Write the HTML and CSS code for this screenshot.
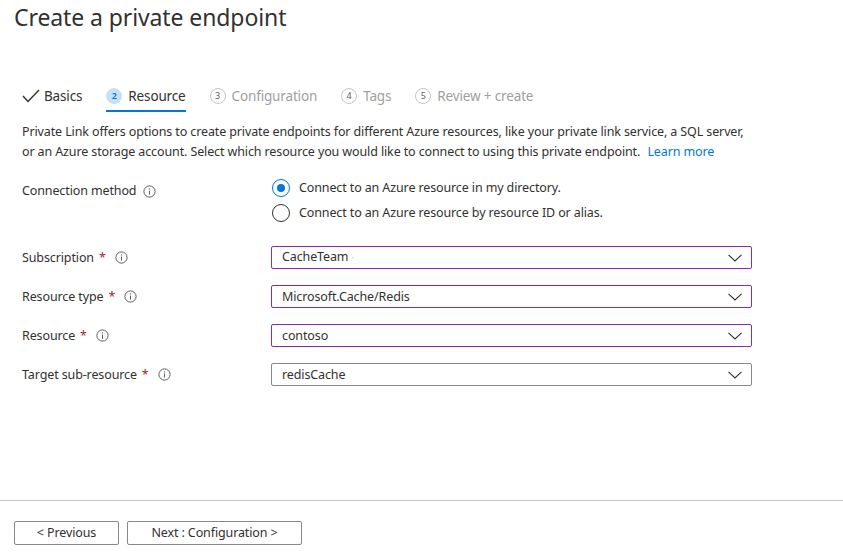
FILE: index.html
```html
<!DOCTYPE html>
<html>
<head>
<meta charset="utf-8">
<link rel="stylesheet" href="styles.css">
</head>
<body>
<div class="page">
  <main class="main">
    <h1 class="title">Create a private endpoint</h1>
    <nav class="tabs">
      <div class="tab done">
        <svg class="check" width="18" height="14" viewBox="0 0 18 14"><polyline points="1,7 6,12.5 17,1" fill="none" stroke="#323130" stroke-width="1.4"/></svg>
        <span>Basics</span>
      </div>
      <div class="tab active">
        <span class="step">2</span><span>Resource</span>
      </div>
      <div class="tab">
        <span class="step">3</span><span>Configuration</span>
      </div>
      <div class="tab">
        <span class="step">4</span><span>Tags</span>
      </div>
      <div class="tab">
        <span class="step">5</span><span>Review + create</span>
      </div>
    </nav>
    <p class="intro">Private Link offers options to create private endpoints for different Azure resources, like your private link service, a SQL server, or an Azure storage account. Select which resource you would like to connect to using this private endpoint. <a class="link">Learn more</a></p>

    <div class="form">
      <div class="row radio-row">
        <div class="label">Connection method <svg class="info" width="13" height="13" viewBox="0 0 13 13"><circle cx="6.5" cy="6.5" r="5.6" fill="none" stroke="#605e5c" stroke-width="1"/><line x1="6.5" y1="5.6" x2="6.5" y2="9.6" stroke="#605e5c" stroke-width="1"/><circle cx="6.5" cy="3.9" r="0.7" fill="#605e5c"/></svg></div>
        <div class="radios">
          <div class="radio checked"><span class="dot"></span><span>Connect to an Azure resource in my directory.</span></div>
          <div class="radio"><span class="dot"></span><span>Connect to an Azure resource by resource ID or alias.</span></div>
        </div>
      </div>

      <div class="row">
        <div class="label">Subscription <span class="req">*</span> <svg class="info" width="13" height="13" viewBox="0 0 13 13"><circle cx="6.5" cy="6.5" r="5.6" fill="none" stroke="#605e5c" stroke-width="1"/><line x1="6.5" y1="5.6" x2="6.5" y2="9.6" stroke="#605e5c" stroke-width="1"/><circle cx="6.5" cy="3.9" r="0.7" fill="#605e5c"/></svg></div>
        <div class="select invalid"><span>CacheTeam <span class="faint">&middot;</span></span><svg class="chev" width="14" height="8" viewBox="0 0 14 8"><polyline points="0.5,0.8 7,7 13.5,0.8" fill="none" stroke="#323130" stroke-width="1.1"/></svg></div>
      </div>

      <div class="row">
        <div class="label">Resource type <span class="req">*</span> <svg class="info" width="13" height="13" viewBox="0 0 13 13"><circle cx="6.5" cy="6.5" r="5.6" fill="none" stroke="#605e5c" stroke-width="1"/><line x1="6.5" y1="5.6" x2="6.5" y2="9.6" stroke="#605e5c" stroke-width="1"/><circle cx="6.5" cy="3.9" r="0.7" fill="#605e5c"/></svg></div>
        <div class="select invalid"><span>Microsoft.Cache/Redis</span><svg class="chev" width="14" height="8" viewBox="0 0 14 8"><polyline points="0.5,0.8 7,7 13.5,0.8" fill="none" stroke="#323130" stroke-width="1.1"/></svg></div>
      </div>

      <div class="row">
        <div class="label">Resource <span class="req">*</span> <svg class="info" width="13" height="13" viewBox="0 0 13 13"><circle cx="6.5" cy="6.5" r="5.6" fill="none" stroke="#605e5c" stroke-width="1"/><line x1="6.5" y1="5.6" x2="6.5" y2="9.6" stroke="#605e5c" stroke-width="1"/><circle cx="6.5" cy="3.9" r="0.7" fill="#605e5c"/></svg></div>
        <div class="select invalid"><span>contoso</span><svg class="chev" width="14" height="8" viewBox="0 0 14 8"><polyline points="0.5,0.8 7,7 13.5,0.8" fill="none" stroke="#323130" stroke-width="1.1"/></svg></div>
      </div>

      <div class="row">
        <div class="label">Target sub-resource <span class="req">*</span> <svg class="info" width="13" height="13" viewBox="0 0 13 13"><circle cx="6.5" cy="6.5" r="5.6" fill="none" stroke="#605e5c" stroke-width="1"/><line x1="6.5" y1="5.6" x2="6.5" y2="9.6" stroke="#605e5c" stroke-width="1"/><circle cx="6.5" cy="3.9" r="0.7" fill="#605e5c"/></svg></div>
        <div class="select"><span>redisCache</span><svg class="chev" width="14" height="8" viewBox="0 0 14 8"><polyline points="0.5,0.8 7,7 13.5,0.8" fill="none" stroke="#323130" stroke-width="1.1"/></svg></div>
      </div>
    </div>
  </main>
  <footer class="footer">
    <button class="btn prev">&lt; Previous</button>
    <button class="btn next">Next : Configuration &gt;</button>
  </footer>
</div>
</body>
</html>
```
FILE: styles.css
```css
* { box-sizing: border-box; }
html, body { margin: 0; padding: 0; background: #fff; }
body {
  font-family: "Noto Sans", "Open Sans", sans-serif;
  color: #323130;
  font-size: 12.5px;
  letter-spacing: -0.12px;
}
.page {
  width: 843px;
  height: 556px;
  display: flex;
  flex-direction: column;
  overflow: hidden;
}
.main {
  height: 501px;
  flex: none;
  border-bottom: 1px solid #c8c6c4;
}
.title {
  margin: 0;
  padding: 0 0 0 14px;
  font-size: 23px;
  font-weight: 400;
  line-height: 34px;
  letter-spacing: -0.1px;
}
.tabs {
  display: flex;
  margin: 52px 0 0 22px;
  gap: 24px;
  height: 36px;
}
.tab {
  display: flex;
  align-items: flex-start;
  gap: 6px;
  font-size: 13.5px;
  letter-spacing: -0.15px;
  line-height: 20px;
  color: #a19f9d;
  height: 26px;
}
.tab.done { color: #323130; gap: 4px; }
.tab.done .check { margin-top: 3px; }
.tab.active {
  color: #323130;
  border-bottom: 2px solid #0078d4;
  height: 26px;
}
.step {
  width: 16px;
  height: 16px;
  border-radius: 50%;
  border: 1px solid #c8c6c4;
  font-size: 9px;
  letter-spacing: 0;
  line-height: 14px;
  text-align: center;
  margin-top: 2px;
  color: #605e5c;
}
.tab.active .step {
  background: #c7e0f4;
  border-color: #c7e0f4;
  color: #0078d4;
  font-weight: 600;
}
.intro {
  margin: 0 0 0 22px;
  width: 736px;
  line-height: 20px;
}
.link { color: #0078d4; margin-left: 4px; }
.form {
  margin: 16px 0 0 22px;
  display: flex;
  flex-direction: column;
  gap: 16px;
}
.row {
  display: flex;
  align-items: center;
}
.radio-row { align-items: flex-start; margin-bottom: 7px; }
.label {
  width: 249px;
  flex: none;
  display: flex;
  align-items: center;
  line-height: 20px;
}
.radio-row .label { margin-top: 3px; }
.req { color: #a4262c; margin-left: 5px; margin-right: 4px; }
.info { margin-left: 7px; }
.req + .info { margin-left: 5px; }
.radios {
  display: flex;
  flex-direction: column;
  gap: 5px;
}
.radio {
  display: flex;
  align-items: center;
  gap: 9px;
  line-height: 20px;
  margin-left: 1px;
}
.dot {
  width: 18px;
  height: 18px;
  border: 1px solid #323130;
  border-radius: 50%;
  position: relative;
}
.radio.checked .dot { border-color: #0078d4; }
.radio.checked .dot::after {
  content: "";
  position: absolute;
  left: 4px; top: 4px;
  width: 8px; height: 8px;
  border-radius: 50%;
  background: #0078d4;
}
.select {
  width: 481px;
  height: 23px;
  border: 1px solid #8a8886;
  border-radius: 2px;
  display: flex;
  align-items: center;
  justify-content: space-between;
  padding: 0 9px 0 10px;
  line-height: 20px;
}
.select.invalid { border-color: #8a2da5; }
.faint { color: #c8c6c4; font-size: 9px; }
.footer {
  display: flex;
  gap: 8px;
  padding: 20px 0 0 14px;
}
.btn {
  height: 24px;
  border: 1px solid #8a8886;
  border-radius: 2px;
  background: #fff;
  font-family: inherit;
  font-size: 12.5px;
  letter-spacing: -0.12px;
  color: #323130;
  padding: 0;
  line-height: 20px;
}
.btn.prev { width: 105px; }
.btn.next { width: 175px; }
```
